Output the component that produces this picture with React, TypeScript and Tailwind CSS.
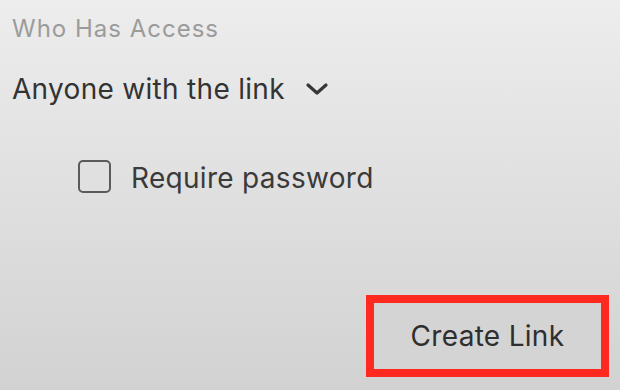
export default function App() {
  return (
    <div
      className="w-[620px] h-[390px] flex flex-col bg-gradient-to-b from-[#ededed] to-[#d2d2d2] text-[#333333] overflow-hidden"
      style={{ fontFamily: 'Inter, "Open Sans", sans-serif' }}
    >
      {/* Header */}
      <div className="pl-[12px] pt-[14px] text-[24px] tracking-[1px] leading-[30px] text-[#9b9b9b]">
        Who Has Access
      </div>

      {/* Access dropdown */}
      <div className="pl-[12px] mt-[28px] flex items-center h-[34px]">
        <span className="text-[28px] tracking-[0.3px] leading-[34px] text-[#333333]">Anyone with the link</span>
        <svg className="ml-[20px] w-[24px] h-[14px]" viewBox="0 0 24 14" fill="none">
          <path d="M3 3 L12 11 L21 3" stroke="#363636" strokeWidth="3.2" strokeLinecap="round" strokeLinejoin="round" />
        </svg>
      </div>

      {/* Password checkbox */}
      <label className="ml-[78px] mt-[52px] flex items-center gap-[20px]">
        <span className="w-[33px] h-[33px] rounded-[5px] border-2 border-[#5a5a5a] bg-[#e0e0e0]" />
        <span className="text-[28px] tracking-[0.3px] leading-[34px] pt-[3px] text-[#3a3a3a]">Require password</span>
      </label>

      {/* Actions */}
      <div className="mt-auto mb-[13px] mr-[11px] flex justify-end">
        <button className="w-[243px] h-[82px] border-[8px] border-[#ff2a1f] bg-[#d4d4d4] text-[28px] tracking-[0.3px] text-[#2e2e2e] flex items-center justify-center">
          Create Link
        </button>
      </div>
    </div>
  )
}
